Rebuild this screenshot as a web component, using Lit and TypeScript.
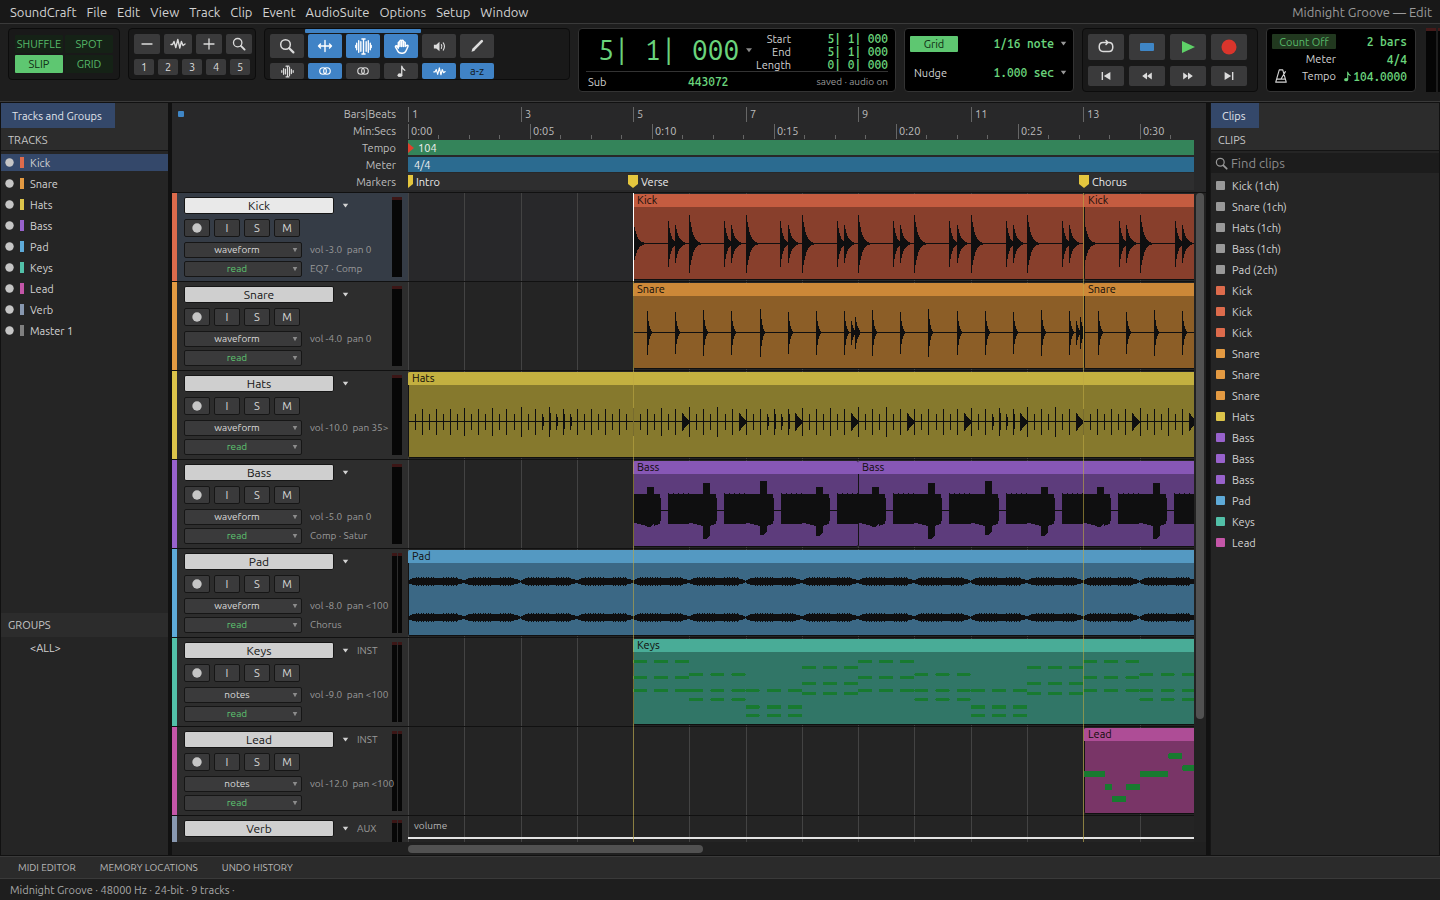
import { LitElement, html, svg, css, nothing } from "lit";
import { customElement, state } from "lit/decorators.js";
import { classMap } from "lit/directives/class-map.js";

/** Horizontal zoom of the timeline, in pixels per bar. */
const BAR = 56.27;
const TEMPO = 104;
const SECOND = (BAR * TEMPO) / 240;
const BODY = 72;

/** Pixel column of a bar line, and of a clip edge, which snaps to the column after it. */
const barX = (bar: number) => Math.round((bar - 1) * BAR);
const clipX = (bar: number) => Math.round((bar - 1) * BAR + 0.3);

type Wave = "kick" | "snare" | "hats" | "bass" | "pad" | "keys" | "lead";
interface Clip { name: string; start: number; bars: number }
interface Track {
  name: string; color: string; title: string; body: string; view: string;
  mix: string; plugins?: string; kind?: string; stereo?: boolean;
  wave?: Wave; clips: Clip[];
}

const TRACKS: Track[] = [
  { name: "Kick", color: "#dd6b4c", title: "#c45c40", body: "#883f2c", view: "waveform", mix: "vol -3.0  pan 0", plugins: "EQ7 · Comp", wave: "kick", clips: [{ name: "Kick", start: 5, bars: 8 }, { name: "Kick", start: 13, bars: 8 }] },
  { name: "Snare", color: "#e39a42", title: "#cc8838", body: "#8c5e27", view: "waveform", mix: "vol -4.0  pan 0", wave: "snare", clips: [{ name: "Snare", start: 5, bars: 8 }, { name: "Snare", start: 13, bars: 8 }] },
  { name: "Hats", color: "#dcc44a", title: "#c3b040", body: "#86792d", view: "waveform", mix: "vol -10.0  pan 35>", wave: "hats", clips: [{ name: "Hats", start: 1, bars: 20 }] },
  { name: "Bass", color: "#9862cc", title: "#8757b6", body: "#5d3c7c", view: "waveform", mix: "vol -5.0  pan 0", plugins: "Comp · Satur", wave: "bass", clips: [{ name: "Bass", start: 5, bars: 4 }, { name: "Bass", start: 9, bars: 8 }] },
  { name: "Pad", color: "#5eaad8", title: "#5499c2", body: "#3b6885", view: "waveform", mix: "vol -8.0  pan <100", plugins: "Chorus", stereo: true, wave: "pad", clips: [{ name: "Pad", start: 1, bars: 20 }] },
  { name: "Keys", color: "#52c0a8", title: "#49ac97", body: "#317667", view: "notes", mix: "vol -9.0  pan <100", kind: "INST", stereo: true, wave: "keys", clips: [{ name: "Keys", start: 5, bars: 16 }] },
  { name: "Lead", color: "#c456a8", title: "#ae4d96", body: "#793567", view: "notes", mix: "vol -12.0  pan <100", kind: "INST", stereo: true, wave: "lead", clips: [{ name: "Lead", start: 13, bars: 8 }] },
  { name: "Verb", color: "#8898b0", title: "", body: "", view: "", mix: "", kind: "AUX", stereo: true, clips: [] },
];

const CLIP_BIN: [string, string][] = [
  ...["Kick (1ch)", "Snare (1ch)", "Hats (1ch)", "Bass (1ch)", "Pad (2ch)"].map((n) => [n, "#999999"] as [string, string]),
  ...["Kick", "Kick", "Kick", "Snare", "Snare", "Snare", "Hats", "Bass", "Bass", "Bass", "Pad", "Keys", "Lead"].map(
    (n) => [n, TRACKS.find((t) => t.name === n)!.color] as [string, string]),
];

/* ---------- waveforms: one vertical stroke per pixel column ---------- */

type Columns = [up: number, down: number][];

function hit(cols: Columns, at: number, amp: number, decay: number, length: number) {
  const x0 = Math.round(at);
  for (let d = 0; d < length; d++) {
    const x = x0 + d;
    if (x >= cols.length) return;
    const a = amp * Math.exp(-d / decay) * (1 - d / (length * 2));
    cols[x] = [Math.max(cols[x][0], a), Math.max(cols[x][1], a)];
  }
}

const OPEN_HAT = [9, 8, 6, 5, 4, 3, 2, 1];

function columnsFor(wave: Wave, clip: Clip, width: number): Columns {
  const cols: Columns = Array.from({ length: width }, () => [0.5, 0.5]);
  for (let b = 0; b < clip.bars; b++) {
    const x = b * BAR;
    if (wave === "kick") {
      hit(cols, x, b === 0 ? 22 : 29, 4, 12);
      hit(cols, x + BAR * 0.62, 23, 3, 9);
      hit(cols, x + BAR * 0.75, 19, 4, 11);
    } else if (wave === "snare") {
      hit(cols, x + BAR * 0.25, 22 + (b % 3), 2, 5);
      hit(cols, x + BAR * 0.75, 21 + (b % 2), 2, 5);
      if (b % 4 === 3) {
        hit(cols, x + BAR * 0.875, 12, 3, 4);
        hit(cols, x + BAR * 0.94, 16, 3, 5);
      }
    } else if (wave === "hats") {
      for (let e = 0; e < 8; e++) {
        if (b + e === 0) continue;
        const at = x + (e * BAR) / 8;
        if (e === 7 && b >= 4) {
          OPEN_HAT.forEach((a, d) => {
            const c = Math.round(at) + d;
            if (c < width) cols[c] = [a, a];
          });
        } else {
          const amp = e % 2 ? 8 : 13 + (e % 4 ? 0 : (b % 3));
          hit(cols, at, amp, b % 4 === 2 && e > 2 ? 4 : 0.4, 2);
        }
      }
    } else if (wave === "bass") {
      const bump = [[24, 16], [28, 28], [30, 24], [24, 25]][b % 4];
      for (let i = 0; i < 57; i++) {
        const c = Math.round(x) + i;
        if (c >= width || (i >= 28 && i < 35)) continue;
        let up = i > 34 && i % 5 === 0 ? 18 : 17;
        let down = i > 34 ? 16 - (((i - 35) % 11) / 11) * 2 - (i - 35) / 10 : 12 + i / 4;
        if (i >= 21) down = Math.min(down, 15 - (i - 21) / 3);
        if (i >= 35) down = Math.max(down, 13);
        if (i >= 14 && i <= 20) [up, down] = [bump[0], bump[1] - Math.max(0, i - 17)];
        if (i === 27) [up, down] = [13, 10];
        cols[c] = [up, down];
      }
    } else if (wave === "pad") {
      for (let i = 0; i < 57; i++) {
        const c = Math.round(x) + i;
        if (c >= width) continue;
        const edge = Math.max(0, Math.min(1, (i + 1) / 6, (56 - i) / 8));
        const grain = edge === 1 && (i * 7 + b * 3) % 5 < 2 && i % 28 > 6 ? 1 : 0;
        const a = Math.max(0.6, 3.4 * Math.sqrt(edge) + grain);
        cols[c] = [a, a];
      }
    }
  }
  return cols;
}

const strokes = (cols: Columns, mid: number) =>
  cols.map(([u, d], x) => `M${x + 0.5} ${(mid - u).toFixed(1)}V${(mid + d).toFixed(1)}`).join("");

/* Chord tones per bar, and a melody of [start, length, y] in sixteenths. */
const CHORDS = [[9, 25, 38], [22, 38, 47], [38, 54, 63], [15, 31, 41]];
const MELODY = [[0, 6, 33], [6, 2, 46], [8, 4, 58], [12, 4, 46], [16, 8, 33], [24, 4, 15], [28, 4, 27]];

function clipArt(wave: Wave, clip: Clip) {
  const width = Math.round(clip.bars * BAR);
  let art;
  if (wave === "keys") {
    art = Array.from({ length: clip.bars }, (_, b) => [0, 3 / 8, 6 / 8].map((o) => CHORDS[b % 4].map((y) =>
      svg`<rect x=${(b + o) * BAR} y=${y - 1} width=${BAR / 4} height=${y === 54 ? 4 : 3} rx="1" fill="#187a30"></rect>`)));
  } else if (wave === "lead") {
    art = MELODY.map(([s, l, y]) =>
      svg`<rect x=${(s * BAR) / 16} y=${y - 3} width=${(l * BAR) / 16} height="6" rx="1" fill="#187a30"></rect>`);
  } else {
    const cols = columnsFor(wave, clip, width);
    const d = wave === "pad" ? strokes(cols, 18.5) + strokes(cols, 54.5) : strokes(cols, 36.5);
    art = svg`<path d=${d} stroke="#0f0f10" stroke-width="1" fill="none"></path>`;
  }
  return html`<svg class="art" width=${width} height=${BODY} viewBox="0 0 ${width} ${BODY}" shape-rendering="crispEdges" aria-hidden="true">${art}</svg>`;
}

/* ---------- icons ---------- */

const line = (d: string, w = 1.5) => svg`<path d=${d} fill="none" stroke="currentColor" stroke-width=${w} stroke-linecap="round" stroke-linejoin="round"></path>`;
const solid = (d: string) => svg`<path d=${d} fill="currentColor"></path>`;
const ICONS: Record<string, unknown> = {
  minus: line("M3 8H13", 1.3),
  plus: line("M3 8H13M8 3V13", 1.3),
  wave: line("M1 8.5H2.5L4 5.5L5.8 11.5L7.8 3.5L9.8 12L11.4 5.5L13 9.5L15 8", 1.4),
  zoom: svg`<circle cx="6.5" cy="6.5" r="4.8" fill="none" stroke="currentColor" stroke-width="1.5"></circle>${line("M10.2 10.2L14.4 14.4", 2.2)}`,
  trim: line("M8 2.5V13.5M1.5 8H14.5M3.5 6L1.5 8L3.5 10M12.500 6L14.500 8L12.500 10", 1.4),
  selector: line("M8 1.500V14.500M6.500 1H9.500M6.500 15H9.500M5.500 3.500V12.500M3.500 2.500V13.500M1.600 5V11M.2 7V9M10.500 3.500V12.500M12.500 2.500V13.500M14.400 5V11M15.800 7V9", 1.3),
  hand: line("M5 9.500V4.300Q5.700 3 6.500 4.300V8V2.800Q7.300 1.500 8.100 2.800V8V2.800Q8.900 1.500 9.800 2.800V8V4.300Q10.700 3 11.500 4.300V8L13.300 6.800Q14.600 7 14 8.200L12.300 12Q11.300 14.300 8.800 14.300Q5.300 14.500 4.300 12L2.300 8.300Q2.200 6.800 3.700 7.500L5 9.500", 1.4),
  speaker: svg`${solid("M2 6V10H4.500L8 13V3L4.500 6Z")}${line("M10 6Q11.200 8 10 10M12 4.200Q14.600 8 12 11.800", 1.2)}`,
  pencil: svg`${line("M5 11L12.800 3.200", 2.600)}${solid("M2.500 13.700L3.500 10.300L5.900 12.700Z")}`,
  scrub: line("M8 1.500V14.500M6.200 1.500H9.800M6.200 14.500H9.800M5.500 5V11M3.200 4.500V11.500M1 7V9M10.500 3V13M12.800 5.500V10.500M15 7V9", 1.5),
  link: svg`<circle cx="5.400" cy="8" r="4.400" fill="none" stroke="currentColor" stroke-width="1.500"></circle><circle cx="10.600" cy="8" r="4.400" fill="none" stroke="currentColor" stroke-width="1.500"></circle>`,
  note: svg`<ellipse cx="6" cy="12.600" rx="2.900" ry="2.300" fill="currentColor"></ellipse>${line("M8.300 12.500V1.500Q9 4.500 12 6.500", 1.600)}`,
  loop: line("M9.500 3.500H11Q14.800 3.500 14.800 8T11 12.500H5Q1.200 12.500 1.200 8T5 3.500H9.500M8 1.500L10 3.500L8 5.500", 1.500),
  stop: svg`<rect x="1" y="4" width="14" height="8" rx="1" fill="#3f86c6"></rect>`,
  play: svg`<path d="M2 2L15 8L2 14Z" fill="#5fd068"></path>`,
  record: svg`<circle cx="8" cy="8" r="7.500" fill="#d9352c"></circle>`,
  start: solid("M3 3.500H4.600V12.500H3ZM13 3.500V12.500L5.500 8Z"),
  back: solid("M8 4V12L2.500 8ZM13.500 4V12L8 8Z"),
  forward: solid("M2.500 4L8 8L2.500 12ZM8 4L13.500 8L8 12Z"),
  end: solid("M3 3.500L10.500 8L3 12.500ZM11.400 3.500H13V12.500H11.400Z"),
  metronome: line("M6 1H10L14 15H2ZM4 11.500H12M8 11.500L13 3", 1.300),
  caret: solid("M4 5.500H12L8 11Z"),
  drop: solid("M3.500 4H12.500L8 12.500Z"),
  dot: svg`<circle cx="8" cy="8" r="7.500" fill="#c6c6c6"></circle>`,
};
const icon = (name: string, size = 16) =>
  html`<svg width=${size} height=${size} viewBox="0 0 16 16" aria-hidden="true">${ICONS[name]}</svg>`;

@customElement("app-root")
export class AppRoot extends LitElement {
  @state() private selected = "Kick";

  static styles = css`
    :host { display: flex; flex-direction: column; height: 100vh; overflow: hidden; background: #111; color: #d2d2d2;
      font: 11px/16px "Ubuntu", "Ubuntu Sans", "Noto Sans", sans-serif; }
    * { box-sizing: border-box; }
    button, input, select { font: inherit; color: inherit; margin: 0; padding: 0; border: 0; background: none; border-radius: 0; }
    button { display: flex; align-items: center; justify-content: center; }
    ul { list-style: none; margin: 0; padding: 0; }
    svg { display: block; flex: none; }
    h2 { margin: 0; font: inherit; }
    a { color: inherit; text-decoration: none; }
    .mono { font-family: "Ubuntu Mono", "Ubuntu Sans Mono", "DejaVu Sans Mono", monospace; font-size: 12px; line-height: 13px; color: #6ad47c; white-space: pre; font-weight: 500; }

    .menubar { display: flex; align-items: center; flex: none; gap: 10px; height: 24px; padding: 0 8px 0 10px; background: #181818; border-bottom: 1px solid #3a3a3a; font-size: 13px; }
    .menubar .title { margin-left: auto; color: #9a9a9a; }

    .toolbar { display: flex; flex: none; align-items: flex-start; gap: 8px; height: 78px; padding: 4px 0 0 8px; background: #1e1e1e; border-bottom: 1px solid #3a3a3a; overflow: hidden; }
    .panel { flex: none; height: 52px; padding: 5px; border: 1px solid #0c0c0c; border-radius: 4px; background: #191919; }
    .panel.tall { height: 64px; }
    .panel.lcd { border-color: #333; background: #000; }
    .modes { display: grid; grid-template-columns: 48px 48px; grid-auto-rows: 18px; gap: 2px; padding: 6px 6px; }
    .modes button { background: #152216; color: #57ba69; border-radius: 1px; }
    .modes .on { background: #5ec771; color: #0d2a12; }
    .row { display: flex; gap: 4px; }
    .row + .row { margin-top: 5px; }
    .zooms { padding-right: 3px; }
    .tool { height: 20px; width: 26px; border-radius: 2px; background: #3a3a3b; color: #dcdcdc; }
    .tool.wide { width: 28px; }
    .tool.small { width: 20px; height: 16px; }
    .edit { width: 306px; padding: 0 5px; }
    .edit .smart { width: 116px; height: 4px; margin: 0 0 1px 35px; border-radius: 1px; background: #3f82c4; }
    .edit .tool { width: 34px; height: 24px; }
    .edit .tool.low { height: 16px; }
    .tool.on, .edit .tool.on { background: #4083c6; color: #fff; }
    .edit .tool.on.text { color: #101820; }

    .counter { width: 318px; display: grid; grid-template-rows: 40px 1fr; padding: 3px 7px 0; }
    .counter .main { display: grid; grid-template-columns: 162px 43px 1fr; border-bottom: 1px solid #333; }
    .counter .big { display: flex; align-items: center; gap: 4px; padding-left: 12px; height: 36px; }
    .big .mono { font-size: 28px; line-height: 32px; font-weight: 400; }
    .big svg { color: #888; }
    .stack { display: flex; flex-direction: column; text-align: right; line-height: 13px; }
    .stack.labels { padding-top: 1px; }
    .counter .sub { display: grid; grid-template-columns: 100px 1fr auto; align-items: center; padding-left: 2px; }
    .sub .note { color: #9a9a9a; font-size: 10px; white-space: nowrap; }

    .gridbox { width: 170px; display: grid; grid-template-columns: 48px 1fr; grid-auto-rows: 29px; padding: 0 4px 0 5px; align-items: center; }
    .gridbox .toggle { height: 16px; background: #5ec771; color: #0d2a12; border-radius: 1px; }
    .gridbox .name { padding-left: 4px; }
    .value { display: flex; align-items: center; justify-content: flex-end; gap: 4px; }
    .value svg { color: #999; }

    .transport { width: 176px; display: grid; grid-template-columns: repeat(4, 36px); grid-template-rows: 26px 20px; gap: 6px 5px; }
    .transport button { border-radius: 2px; background: #3a3a3b; color: #dcdcdc; }

    .tempobox { width: 150px; display: grid; grid-template-columns: 64px 1fr; grid-template-rows: 15px 20px 14px; padding: 5px 8px 0 5px; align-items: center; }
    .tempobox .count { height: 15px; border-radius: 1px; background: #21381f; color: #57ba69; }
    .tempobox .end { display: flex; justify-content: flex-end; align-items: center; }
    .tempobox .tempo { justify-content: space-between; padding-left: 2px; }
    .outmeter { display: flex; gap: 2px; height: 64px; padding-left: 2px; }
    .outmeter i { width: 10px; background: #050505; border-top: 3px solid #451a1a; }

    .workspace { flex: 1; min-height: 0; display: grid; grid-template-columns: 167px minmax(0, 1fr) 229px; gap: 4px; padding: 1px 1px 1px 1px; }
    .side { display: flex; flex-direction: column; min-height: 0; background: #252525; }
    .side.right { border-left: 1px solid #161616; }
    .side .head { background: #2c2c2c; border-bottom: 1px solid #141414; }
    .tab { height: 25px; padding: 0 13px 0 11px; background: #34486a; color: #e0e4ea; }
    .side h2 { padding: 4px 7px 2px; color: #c8c8c8; }
    .side .head h2 { height: 22px; }
    .tracklist { flex: 1; padding-top: 3px; }
    .tracklist li { margin-bottom: 4px; }
    .tracklist button { width: 100%; height: 17px; gap: 6px; padding-left: 4px; justify-content: flex-start; }
    .tracklist .sel { background: #34486a; }
    .tracklist .bar { width: 4px; height: 11px; }
    .groups h2 { background: #2c2c2c; height: 24px; }
    .groups { height: 242px; }
    .groups ul { padding: 3px 29px; }

    .search { display: flex; align-items: center; gap: 3px; height: 20px; margin-top: 2px; padding-left: 4px; background: #1c1c1c; color: #999; font-size: 13px; }
    .search input { flex: 1; min-width: 0; outline: 0; }
    .search input::placeholder { color: #8c8c8c; opacity: 1; }
    .bin { padding-top: 2px; }
    .bin li { display: flex; align-items: center; gap: 7px; height: 21px; padding-left: 5px; }
    .bin i { width: 9px; height: 9px; border-radius: 1px; }

    .center { display: flex; flex-direction: column; min-width: 0; min-height: 0; background: #242424; }
    .rulers { flex: none; display: grid; grid-template-columns: 236px minmax(0, 1fr) 12px; grid-auto-rows: 17px; padding: 2px 0; background: #282829; border-bottom: 1px solid #111; }
    .rulers .label { grid-column: 1; padding-right: 12px; text-align: right; color: #bdbdbd; display: flex; align-items: center; }
    .rulers .label span { margin-left: auto; }
    .rulers .label i { width: 6px; height: 6px; margin-left: 6px; border-radius: 1px; background: #3f86c6; }
    .ruler { position: relative; overflow: hidden; color: #bdbdbd; }
    .ruler span { position: absolute; top: 1px; }
    .tick { position: absolute; bottom: 0; width: 1px; height: 15px; background: #666; }
    .tick.minor { height: 4px; }
    .strip { margin: 1px 0; display: flex; align-items: center; padding-left: 6px; color: #f0f0f0; }
    .strip.tempo { background: #34845a; padding-left: 0; gap: 4px; }
    .strip.meter { background: #2b6b90; }
    .ruler.marks { background: #2e2e2f; color: #ececec; }
    .flag { position: absolute; top: 2px; }

    .area { flex: 1; min-height: 0; display: grid; grid-template-columns: minmax(0, 1fr) 12px; }
    .tracks { position: relative; overflow: hidden; }
    .track { display: grid; grid-template-columns: 236px minmax(0, 1fr); height: 89px; border-bottom: 1px solid #111; }
    .header { display: grid; grid-template-columns: 5px 1fr 10px; gap: 0 7px; padding: 0 6px 0 0; background: #2d2d2d; }
    .header.sel { background: #353c46; }
    .controls { padding-top: 4px; position: relative; z-index: 1; }
    .line { display: flex; align-items: center; gap: 4px; }
    .plate { width: 150px; height: 17px; border: 1px solid #161616; border-radius: 2px; background: #cfcfcf; color: #151515; font-size: 12px; }
    .sel .plate { background: #e9e9e9; }
    .line .menu { width: 14px; height: 16px; }
    .line .kind { color: #9a9a9a; font-size: 10px; padding-left: 1px; }
    .btns { margin-top: 5px; }
    .btns button { width: 26px; height: 18px; border: 1px solid #161616; border-radius: 2px; background: #3a3a3b; color: #dadada; }
    .pick { margin-top: 5px; gap: 8px; font-size: 10px; }
    .pick + .pick { margin-top: 3px; }
    .pick label { display: grid; align-items: center; width: 118px; flex: none; }
    .pick select { grid-area: 1 / 1; appearance: none; width: 118px; height: 16px; padding: 0 14px 0 2px; border: 1px solid #161616; border-radius: 2px; background: #3a3a3b; text-align: center; text-align-last: center; line-height: 14px; color: #dadada; }
    .pick .auto { color: #5ec771; }
    .pick svg { grid-area: 1 / 1; justify-self: end; margin-right: 3px; color: #8c8c8c; pointer-events: none; }
    .pick .info { white-space: pre; color: #9a9a9a; width: 70px; }
    .vu { display: flex; gap: 1px; margin: 4px 0; }
    .vu i { flex: 1; background: #070707; border-top: 3px solid #3c1616; }
    .lane { position: relative; overflow: hidden; }
    .lane.sel { background: #28282a; }
    .gl { position: absolute; top: 0; bottom: 0; width: 1px; background: #434343; }
    .clip { position: absolute; top: 1px; height: 86px; overflow: hidden; color: #120d0a; border-radius: 2px; border-bottom: 1px solid #101010; }
    .clip .name { height: 13px; padding-left: 4px; line-height: 13px; }
    .clip .wave { box-shadow: inset 1px 0 #141414; height: 72px; }
    .volume { padding: 2px 6px; font-size: 10px; color: #b4b4b4; position: relative; height: 21px; line-height: 16px; }
    .volline { position: relative; height: 2px; background: #e4e4e4; }
    .overlay { position: absolute; inset: 0 0 0 236px; pointer-events: none; overflow: hidden; }
    .cue { position: absolute; top: 0; bottom: 0; width: 1px; background: #bca843; opacity: .6; }
    .cursor { position: absolute; top: 0; height: 88px; width: 1px; background: #fff; }
    .vscroll { padding: 0 2px; background: #222; }
    .vscroll i { display: block; width: 8px; height: 81%; border-radius: 4px; background: #515151; }
    .hscroll { flex: none; height: 13px; padding: 3px 12px 0 236px; background: #202020; }
    .hscroll i { display: block; width: 295px; height: 8px; border-radius: 4px; background: #515151; }

    .dock { display: flex; flex: none; align-items: center; gap: 24px; height: 23px; padding-left: 18px; background: #2b2b2b; border-top: 1px solid #3a3a3a; border-bottom: 1px solid #3a3a3a; color: #b8b8b8; font-size: 10px; }
    .status { flex: none; height: 21px; padding: 3px 10px; background: #1e1e1e; color: #a8a8a8; }
  `;

  private tool(name: string, label: string, extra = "", size = 16) {
    return html`<button class="tool ${extra}" aria-label=${label}>${icon(name, size)}</button>`;
  }

  private toolbar() {
    return html`<div class="toolbar">
      <div class="panel modes"><button>SHUFFLE</button><button>SPOT</button><button class="on">SLIP</button><button>GRID</button></div>
      <div class="panel zooms">
        <div class="row">${this.tool("minus", "Zoom out")}${this.tool("wave", "Waveform zoom", "wide")}${this.tool("plus", "Zoom in")}${this.tool("zoom", "Zoom", "", 14)}</div>
        <div class="row">${[1, 2, 3, 4, 5].map((n) => html`<button class="tool small">${n}</button>`)}</div>
      </div>
      <div class="panel edit">
        <div class="smart"></div>
        <div class="row">${this.tool("zoom", "Zoomer")}${this.tool("trim", "Trim", "on")}${this.tool("selector", "Selector", "on", 17)}${this.tool("hand", "Grabber", "on", 17)}${this.tool("speaker", "Scrubber", "", 15)}${this.tool("pencil", "Pencil")}</div>
        <div class="row">${this.tool("scrub", "Tab to transient", "low", 13)}${this.tool("link", "Link timeline", "low on", 12)}${this.tool("link", "Link track", "low", 12)}${this.tool("note", "Mirrored MIDI", "low", 13)}${this.tool("wave", "Automation follows edit", "low on", 13)}<button class="tool low on text">a-z</button></div>
      </div>
      <div class="panel tall lcd counter">
        <div class="main">
          <div class="big"><span class="mono">5| 1| 000</span>${icon("caret", 12)}</div>
          <div class="stack labels"><span>Start</span><span>End</span><span>Length</span></div>
          <div class="stack"><span class="mono">5| 1| 000</span><span class="mono">5| 1| 000</span><span class="mono">0| 0| 000</span></div>
        </div>
        <div class="sub"><span>Sub</span><span class="mono">443072</span><span class="note">saved · audio on</span></div>
      </div>
      <div class="panel tall lcd gridbox">
        <button class="toggle">Grid</button><div class="value"><span class="mono">1/16 note</span>${icon("caret", 11)}</div>
        <span class="name">Nudge</span><div class="value"><span class="mono">1.000 sec</span>${icon("caret", 11)}</div>
      </div>
      <div class="panel tall transport">
        ${([["loop", "Loop", 16], ["stop", "Stop", 16], ["play", "Play", 16], ["record", "Record", 16], ["start", "Return to zero", 14], ["back", "Rewind", 14], ["forward", "Fast forward", 14], ["end", "Go to end", 14]] as [string, string, number][])
          .map(([n, l, s]) => html`<button aria-label=${l}>${icon(n, s)}</button>`)}
      </div>
      <div class="panel tall lcd tempobox">
        <button class="count">Count Off</button><span class="end mono">2 bars</span>
        <span class="end">Meter</span><span class="end mono">4/4</span>
        <span class="end tempo">${icon("metronome", 14)}Tempo</span><span class="end mono">${icon("note", 11)}104.0000</span>
      </div>
      <div class="outmeter"><i></i><i></i></div>
    </div>`;
  }

  private rulers() {
    const bars = [1, 3, 5, 7, 9, 11, 13];
    const marks: [string, number][] = [["Intro", 1], ["Verse", 5], ["Chorus", 13]];
    return html`<div class="rulers">
      <div class="label"><i></i><span>Bars|Beats</span></div>
      <div class="ruler">${bars.map((b) => {
        const x = barX(b);
        return html`<div class="tick" style="left:${x}px"></div><span style="left:${x + 4}px">${b}</span>`;
      })}</div><b></b>
      <div class="label"><span>Min:Secs</span></div>
      <div class="ruler">${Array.from({ length: 26 }, (_, i) => {
        const x = Math.round(i * 1.25 * SECOND);
        const s = (i / 4) * 5;
        return i % 4 ? html`<div class="tick minor" style="left:${x}px"></div>`
          : html`<div class="tick" style="left:${x}px"></div><span style="left:${x + 3}px">0:${String(s).padStart(2, "0")}</span>`;
      })}</div><b></b>
      <div class="label"><span>Tempo</span></div>
      <div class="strip tempo"><svg width="6" height="10" viewBox="0 0 6 10" aria-hidden="true"><path d="M0 0L6 5L0 10Z" fill="#e0402c"></path></svg>104</div><b></b>
      <div class="label"><span>Meter</span></div>
      <div class="strip meter">4/4</div><b></b>
      <div class="label"><span>Markers</span></div>
      <div class="ruler marks">${marks.map(([n, b]) => {
        const x = clipX(b);
        return html`<svg class="flag" style="left:${x - 5}px" width="10" height="13" viewBox="0 0 10 13" aria-hidden="true"><path d="M0 0H10V9L5 13L0 9Z" fill="#e4c63e"></path></svg><span style="left:${x + 8}px">${n}</span>`;
      })}</div><b></b>
    </div>`;
  }

  private track(t: Track) {
    const sel = t.name === this.selected;
    return html`<section class="track">
      <div class=${classMap({ header: true, sel })}>
        <div class="color" style="background:${t.color}"></div>
        <div class="controls">
          <div class="line"><button class="plate" @click=${() => (this.selected = t.name)}>${t.name}</button>
            <button class="menu" aria-label="${t.name} menu">${icon("caret", 11)}</button>${t.kind ? html`<span class="kind">${t.kind}</span>` : nothing}</div>
          ${t.view ? html`
            <div class="line btns"><button aria-label="Record arm">${icon("dot", 10)}</button><button>I</button><button>S</button><button>M</button></div>
            <div class="line pick"><label><select aria-label="${t.name} view"><option>${t.view}</option></select>${icon("drop", 8)}</label><span class="info">${t.mix}</span></div>
            <div class="line pick"><label><select class="auto" aria-label="${t.name} automation"><option>read</option></select>${icon("drop", 8)}</label><span class="info">${t.plugins ?? ""}</span></div>` : nothing}
        </div>
        <div class="vu"><i></i>${t.stereo ? html`<i></i>` : nothing}</div>
      </div>
      <div class=${classMap({ lane: true, sel })}>
        ${Array.from({ length: 24 }, (_, b) => html`<div class="gl" style="left:${barX(b + 1)}px"></div>`)}
        ${t.clips.map((c) => html`<div class="clip" style="left:${clipX(c.start)}px;width:${clipX(c.start + c.bars) - clipX(c.start)}px;background:${t.body}">
          <div class="name" style="background:${t.title}">${c.name}</div><div class="wave">${clipArt(t.wave!, c)}</div></div>`)}
        ${t.kind === "AUX" ? html`<div class="volume">volume</div><div class="volline"></div>` : nothing}
      </div>
    </section>`;
  }

  render() {
    const names: [string, string][] = [...TRACKS.map((t) => [t.name, t.color] as [string, string]), ["Master 1", "#808080"]];
    return html`
      <nav class="menubar">
        ${["SoundCraft", "File", "Edit", "View", "Track", "Clip", "Event", "AudioSuite", "Options", "Setup", "Window"].map((m) => html`<a href="#">${m}</a>`)}
        <span class="title">Midnight Groove — Edit</span>
      </nav>
      ${this.toolbar()}
      <main class="workspace">
        <aside class="side">
          <div class="head"><button class="tab">Tracks and Groups</button><h2>TRACKS</h2></div>
          <ul class="tracklist">${names.map(([n, c]) => html`<li><button class=${classMap({ sel: n === this.selected })} @click=${() => (this.selected = n)}>
            ${icon("dot", 9)}<i class="bar" style="background:${c}"></i>${n}</button></li>`)}</ul>
          <div class="groups"><h2>GROUPS</h2><ul><li>&lt;ALL&gt;</li></ul></div>
        </aside>
        <div class="center">
          ${this.rulers()}
          <div class="area">
            <div class="tracks">
              ${TRACKS.map((t) => this.track(t))}
              <div class="overlay">
                ${[5, 13].map((b) => html`<div class="cue" style="left:${barX(b)}px"></div>`)}
                <div class="cursor" style="left:${barX(5)}px"></div>
              </div>
            </div>
            <div class="vscroll"><i></i></div>
          </div>
          <div class="hscroll"><i></i></div>
        </div>
        <aside class="side right">
          <div class="head"><button class="tab">Clips</button><h2>CLIPS</h2></div>
          <label class="search">${icon("zoom", 13)}<input type="text" placeholder="Find clips" aria-label="Find clips"></label>
          <ul class="bin">${CLIP_BIN.map(([n, c]) => html`<li><i style="background:${c}"></i>${n}</li>`)}</ul>
        </aside>
      </main>
      <nav class="dock"><a href="#">MIDI EDITOR</a><a href="#">MEMORY LOCATIONS</a><a href="#">UNDO HISTORY</a></nav>
      <footer class="status">Midnight Groove · 48000 Hz · 24-bit · 9 tracks ·</footer>`;
  }
}
